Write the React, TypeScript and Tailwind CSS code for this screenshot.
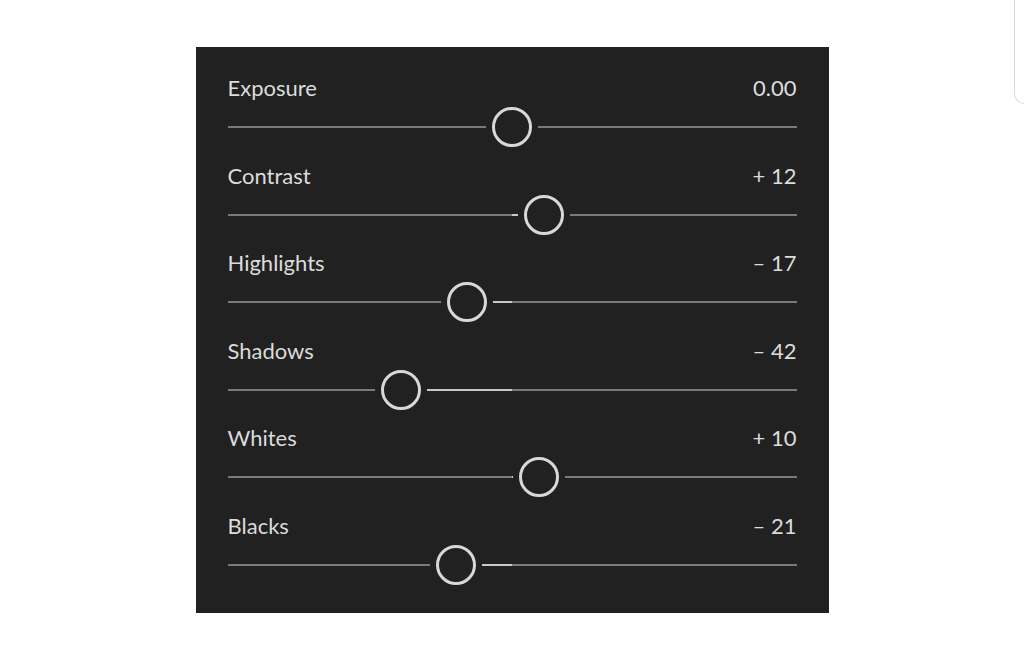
const rows = [
  { label: "Exposure", value: "0.00", amount: 0 },
  { label: "Contrast", value: "+ 12", amount: 12 },
  { label: "Highlights", value: "– 17", amount: -17 },
  { label: "Shadows", value: "– 42", amount: -42 },
  { label: "Whites", value: "+ 10", amount: 10 },
  { label: "Blacks", value: "– 21", amount: -21 },
];

// pixels per unit of slider travel, measured off the track
const STEP = 2.65;

function Slider({ amount }: { amount: number }) {
  const offset = amount * STEP;
  return (
    <div className="relative h-[40px]">
      {/* base track */}
      <div className="absolute left-0 right-0 top-[19px] h-[2px] bg-[#7a7a7a]" />
      {/* fill from center to thumb */}
      <div
        className="absolute top-[19px] h-[2px] bg-[#c8c8c8]"
        style={{
          left: `calc(50% + ${Math.min(0, offset)}px)`,
          width: `${Math.abs(offset)}px`,
        }}
      />
      {/* thumb */}
      <div
        className="absolute top-0 w-[40px] h-[40px] -ml-[20px] rounded-full border-[3px] border-[#d8d8d8] bg-[#212121] shadow-[0_0_0_6px_#212121]"
        style={{ left: `calc(50% + ${offset}px)` }}
      />
    </div>
  );
}

export default function App() {
  return (
    <div className="relative min-h-screen bg-white pt-[47px] font-['Lato','Open_Sans',sans-serif]">
      {/* page edge at top right */}
      <div className="absolute right-0 top-0 w-[10px] h-[104px] border-l border-b border-[#dcdcdc] rounded-bl-[10px]" />

      <div className="mx-auto w-[633px] bg-[#212121] px-[32px] pt-[29px] pb-[28px] flex flex-col gap-[16.5px]">
        {rows.map((r) => (
          <div key={r.label} className="flex flex-col gap-[7px]">
            <div className="flex justify-between items-center h-[24px] text-[22px] leading-[24px] text-[#dcdcdc]">
              <span>{r.label}</span>
              <span>{r.value}</span>
            </div>
            <Slider amount={r.amount} />
          </div>
        ))}
      </div>
    </div>
  );
}
